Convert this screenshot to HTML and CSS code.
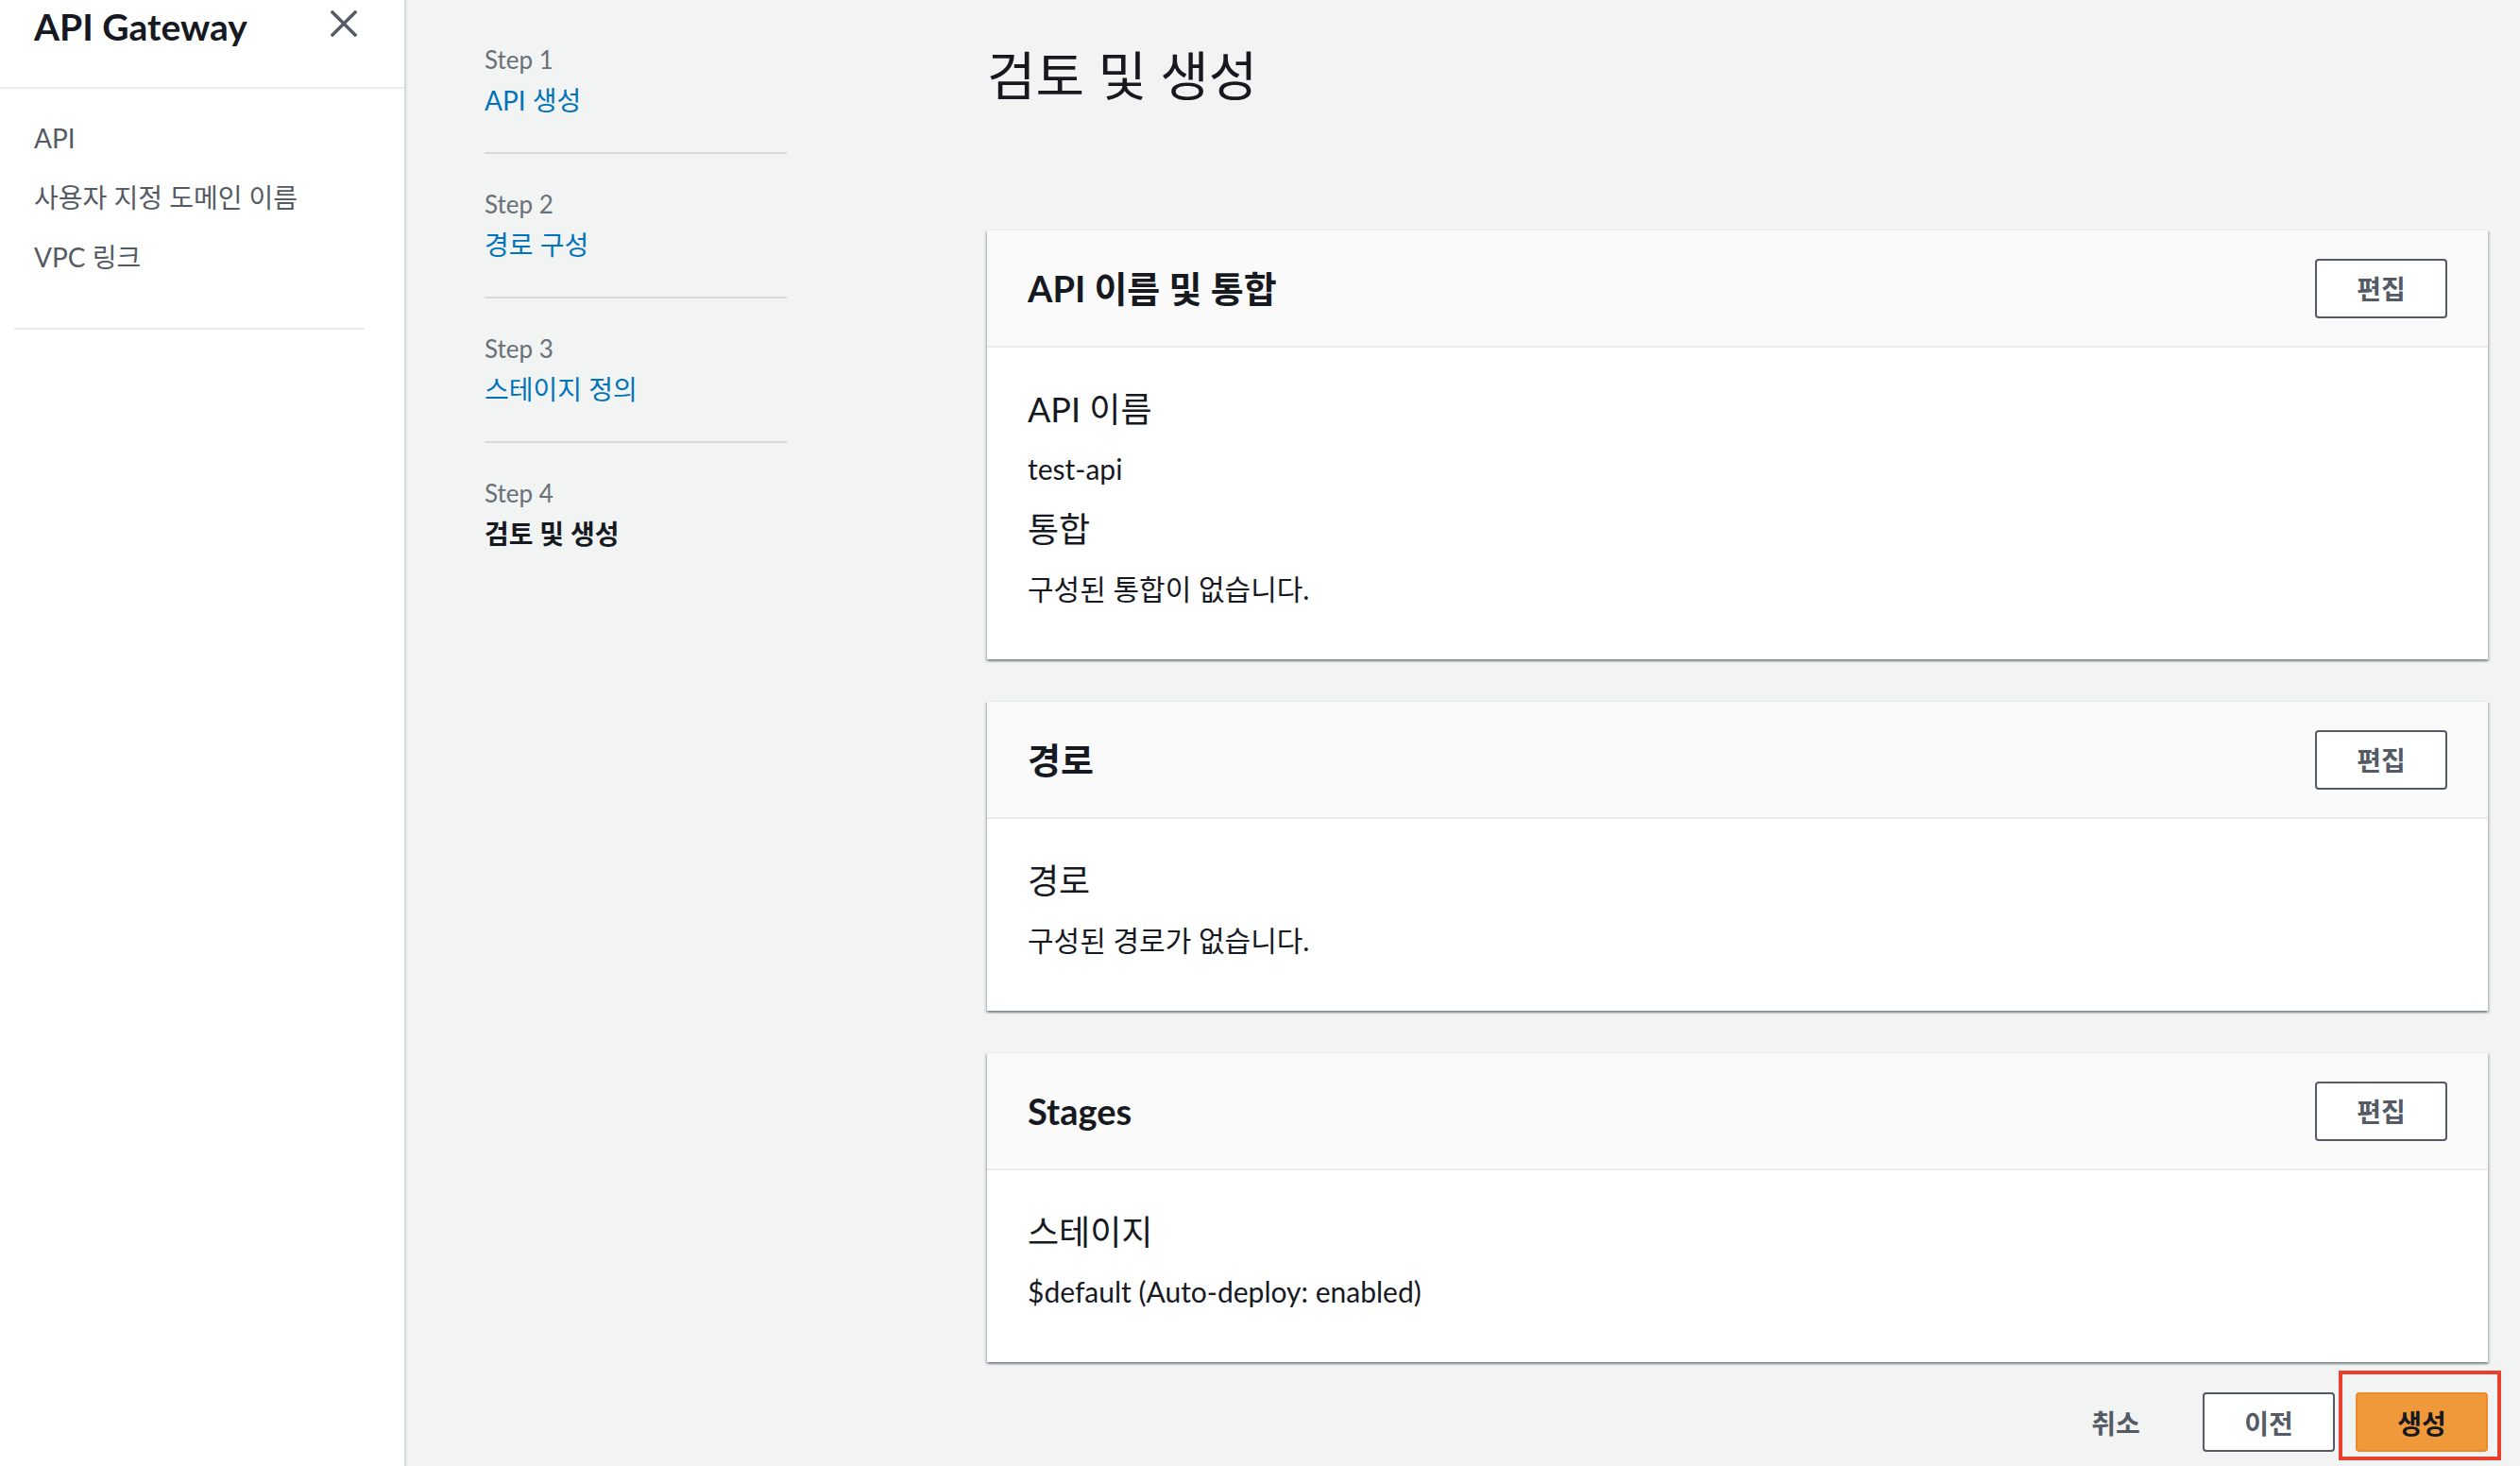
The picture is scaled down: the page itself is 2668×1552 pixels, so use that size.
FILE: index.html
```html
<!DOCTYPE html>
<html lang="ko">
<head>
<meta charset="utf-8">
<title>API Gateway - 검토 및 생성</title>
<link rel="stylesheet" href="styles.css">
</head>
<body>
<div class="app">
  <aside class="sidebar">
    <div class="side-head">
      <h2 class="side-title">API Gateway</h2>
      <button class="close-btn" aria-label="닫기">
        <svg width="28" height="28" viewBox="0 0 28 28"><path d="M2 2 L26 26 M26 2 L2 26" stroke="#545b64" stroke-width="3.4" fill="none" stroke-linecap="square"/></svg>
      </button>
    </div>
    <nav class="side-nav">
      <a class="side-link">API</a>
      <a class="side-link">사용자 지정 도메인 이름</a>
      <a class="side-link">VPC 링크</a>
    </nav>
    <div class="side-divider"></div>
  </aside>

  <div class="page">
    <ol class="steps">
      <li class="step">
        <div class="step-label">Step 1</div>
        <a class="step-link">API 생성</a>
      </li>
      <li class="step">
        <div class="step-label">Step 2</div>
        <a class="step-link">경로 구성</a>
      </li>
      <li class="step">
        <div class="step-label">Step 3</div>
        <a class="step-link">스테이지 정의</a>
      </li>
      <li class="step step-current">
        <div class="step-label">Step 4</div>
        <span class="step-link">검토 및 생성</span>
      </li>
    </ol>

    <main class="content">
      <h1 class="page-title">검토 및 생성</h1>

      <section class="card">
        <header class="card-head">
          <h2 class="card-title">API 이름 및 통합</h2>
          <button class="btn">편집</button>
        </header>
        <dl class="card-body">
          <dt class="kv-label">API 이름</dt>
          <dd class="kv-value">test-api</dd>
          <dt class="kv-label">통합</dt>
          <dd class="kv-value">구성된 통합이 없습니다.</dd>
        </dl>
      </section>

      <section class="card">
        <header class="card-head">
          <h2 class="card-title">경로</h2>
          <button class="btn">편집</button>
        </header>
        <dl class="card-body">
          <dt class="kv-label">경로</dt>
          <dd class="kv-value">구성된 경로가 없습니다.</dd>
        </dl>
      </section>

      <section class="card">
        <header class="card-head">
          <h2 class="card-title">Stages</h2>
          <button class="btn">편집</button>
        </header>
        <dl class="card-body">
          <dt class="kv-label">스테이지</dt>
          <dd class="kv-value">$default (Auto-deploy: enabled)</dd>
        </dl>
      </section>

      <div class="actions">
        <button class="btn btn-link">취소</button>
        <button class="btn">이전</button>
        <div class="highlight-wrap">
          <button class="btn btn-primary">생성</button>
          <span class="highlight"></span>
        </div>
      </div>
    </main>
  </div>
</div>
</body>
</html>
```

FILE: styles.css
```css
* { box-sizing: border-box; }

html, body {
  margin: 0;
  padding: 0;
  height: 100%;
  overflow: hidden;
}

body {
  background: #f2f3f3;
  color: #16191f;
  font-family: Lato, "Noto Sans CJK KR", sans-serif;
}

.app {
  display: grid;
  grid-template-columns: 430px 1fr;
  height: 1552px;
}

/* Sidebar */
.sidebar {
  background: #ffffff;
  border-right: 2px solid #d5dbdb;
  box-shadow: 1px 0 0 #e6eaea;
}

.side-head {
  height: 94px;
  display: flex;
  justify-content: space-between;
  align-items: flex-start;
  padding: 4px 50px 0 36px;
  border-bottom: 2px solid #eaeded;
}

.side-title {
  margin: 0;
  font-size: 39px;
  line-height: 48px;
  font-weight: 700;
  color: #16191f;
}

.close-btn {
  border: 0;
  background: none;
  padding: 0;
  margin-top: 7px;
  width: 28px;
  height: 28px;
  display: flex;
}

.side-nav {
  display: flex;
  flex-direction: column;
  padding: 21px 0 0 36px;
}

.side-link {
  display: block;
  font-size: 28px;
  line-height: 39px;
  padding: 12px 0;
  color: #545b64;
}

.side-divider {
  margin: 43px 0 0 15px;
  width: 371px;
  height: 2px;
  background: #eaeded;
}

/* Page */
.page {
  display: flex;
  gap: 212px;
  padding: 0 34px 0 83px;
}

.steps {
  list-style: none;
  margin: 0;
  padding: 9px 0 0 0;
  width: 320px;
  flex: 0 0 320px;
}

.step {
  padding: 36px 0 35px;
  border-bottom: 2px solid #d5dbdb;
}

.step:first-child {
  padding-top: 37px;
}

.step-current {
  border-bottom: 0;
}

.step-label {
  font-size: 26px;
  line-height: 34px;
  color: #687078;
}

.step-link {
  display: block;
  margin-top: 6px;
  font-size: 28px;
  line-height: 40px;
  color: #0073bb;
}

.step-current .step-link {
  color: #16191f;
  font-weight: 700;
}

.content {
  flex: 1;
  min-width: 0;
  padding-top: 47px;
}

.page-title {
  margin: 0 0 130px;
  font-size: 56px;
  line-height: 66px;
  font-weight: 400;
  color: #16191f;
}

/* Cards */
.card {
  background: #ffffff;
  border-top: 1px solid #eaeded;
  box-shadow: 0 2px 2px 0 rgba(0, 28, 36, 0.3), 2px 2px 2px 0 rgba(0, 28, 36, 0.15), -2px 2px 2px 0 rgba(0, 28, 36, 0.15);
  margin-bottom: 44px;
}

.card-head {
  height: 124px;
  background: #fafafa;
  border-bottom: 2px solid #eaeded;
  display: flex;
  align-items: center;
  justify-content: space-between;
  padding: 0 43px;
}

.card-title {
  margin: 0;
  font-size: 38px;
  line-height: 48px;
  font-weight: 700;
  color: #16191f;
}

.card-body {
  margin: 0;
  padding: 41px 43px 55px;
}

.kv-label {
  font-size: 36px;
  line-height: 48px;
  margin: 0 0 19px;
  color: #16191f;
}

.kv-value {
  font-size: 30px;
  line-height: 40px;
  margin: 0 0 20px;
  color: #16191f;
}

.kv-value:last-child {
  margin-bottom: 0;
}

/* Buttons */
.btn {
  width: 140px;
  height: 63px;
  border: 2px solid #545b64;
  border-radius: 4px;
  background: #ffffff;
  color: #545b64;
  font-family: Lato, "Noto Sans CJK KR", sans-serif;
  font-size: 28px;
  font-weight: 700;
  padding: 0;
  display: flex;
  align-items: center;
  justify-content: center;
}

.btn-link {
  border-color: transparent;
  background: transparent;
}

.btn-primary {
  background: #f0993b;
  border-color: #ea8a2a;
  color: #16191f;
}

.actions {
  display: flex;
  justify-content: flex-end;
  gap: 22px;
  margin-top: -12px;
}

.highlight-wrap {
  position: relative;
}

.highlight {
  position: absolute;
  top: -23px;
  right: -14px;
  bottom: -9px;
  left: -18px;
  border: 4px solid #e8402c;
  pointer-events: none;
}
```
